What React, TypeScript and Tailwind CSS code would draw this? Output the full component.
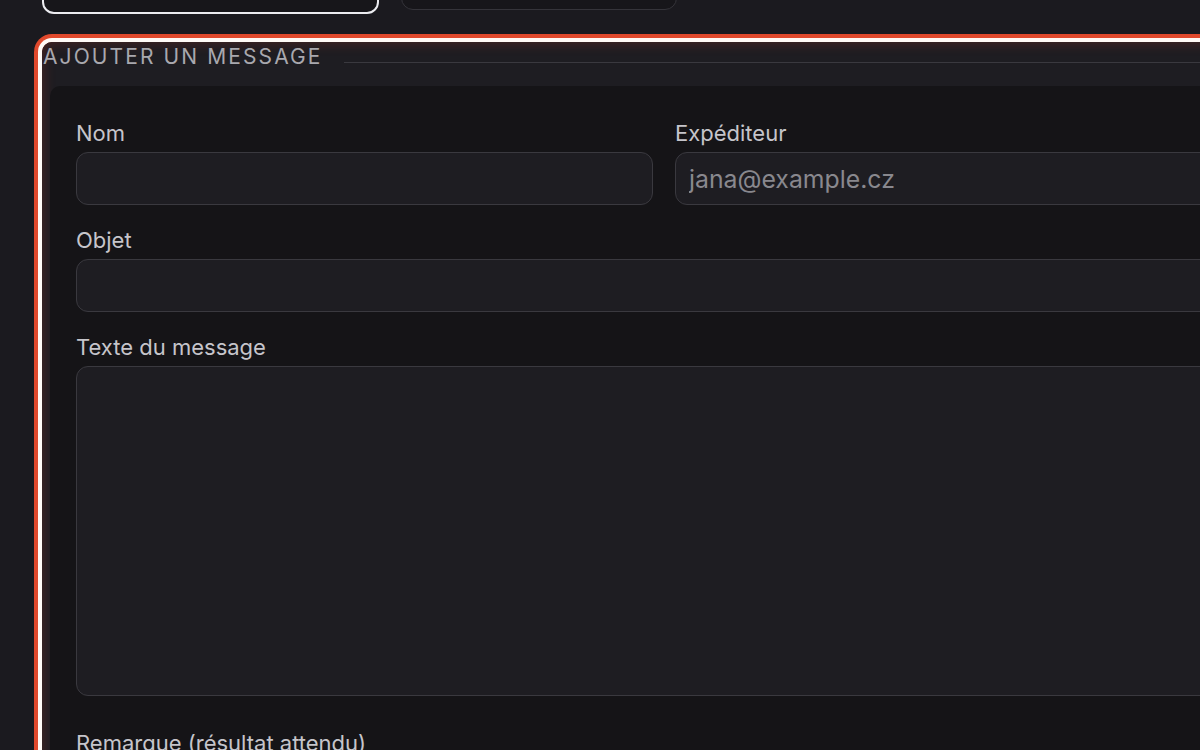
import React from 'react';

const font = { fontFamily: 'Inter, "Noto Sans", sans-serif' };

const labelCls = 'text-[22px] leading-[30px] text-[#c6c5cb] mb-[4px]';
const boxCls = 'rounded-[12px] border border-[#3a393f] bg-[#1e1d22] outline-none';

function Field({ label, placeholder }: { label: string; placeholder?: string }) {
  return (
    <div className="flex flex-col">
      <label className={labelCls}>{label}</label>
      <input
        placeholder={placeholder}
        className={`h-[53px] px-[13px] text-[24.8px] text-[#c6c5cb] placeholder:text-[#89888e] ${boxCls}`}
      />
    </div>
  );
}

export default function App() {
  return (
    <div className="w-[1200px] h-[750px] overflow-hidden bg-[#1b1a1f]" style={font}>
      <div className="w-[1300px] pl-[42px]">
        {/* tabs, mostly scrolled out of view */}
        <div className="flex gap-[22px] -mt-[39px]">
          <button className="w-[337px] h-[53px] rounded-[12px] border-2 border-[#ececf0] bg-[#17161a]" />
          <button className="w-[276px] h-[49px] rounded-[12px] border border-[#35343a] bg-[#17161a]" />
        </div>

        <fieldset className="mt-[28px] w-[1236px] rounded-tl-[10px] bg-[#1e1d22] shadow-[0_0_0_4px_#fffaf6,0_0_0_8px_#e1492c,inset_0_0_14px_rgba(200,60,40,0.3)]">
          <div className="flex items-start h-[44px]">
            <span className="text-[21px] leading-[28px] mt-px tracking-[0.1em] uppercase text-[#a9a8ae] ml-px">
              Ajouter un message
            </span>
            <div className="flex-1 h-px bg-[#3a393f] mt-[20px] ml-[21px]" />
          </div>

          <div className="ml-[8px] rounded-tl-[10px] bg-[#151417] pl-[26px] pr-[26px] pt-[32px] pb-[40px] flex flex-col gap-[20px]">
            <div className="grid grid-cols-2 gap-[22px]">
              <Field label="Nom" />
              <Field label="Expéditeur" placeholder="jana@example.cz" />
            </div>
            <Field label="Objet" />
            <div className="flex flex-col">
              <label className={labelCls}>Texte du message</label>
              <textarea className={`h-[330px] resize-none px-[13px] py-[10px] text-[22px] text-[#c6c5cb] ${boxCls}`} />
            </div>
            <div className="flex flex-col mt-[12px]">
              <label className={labelCls}>Remarque (résultat attendu)</label>
              <input className={`h-[53px] ${boxCls}`} />
            </div>
          </div>
        </fieldset>
      </div>
    </div>
  );
}
